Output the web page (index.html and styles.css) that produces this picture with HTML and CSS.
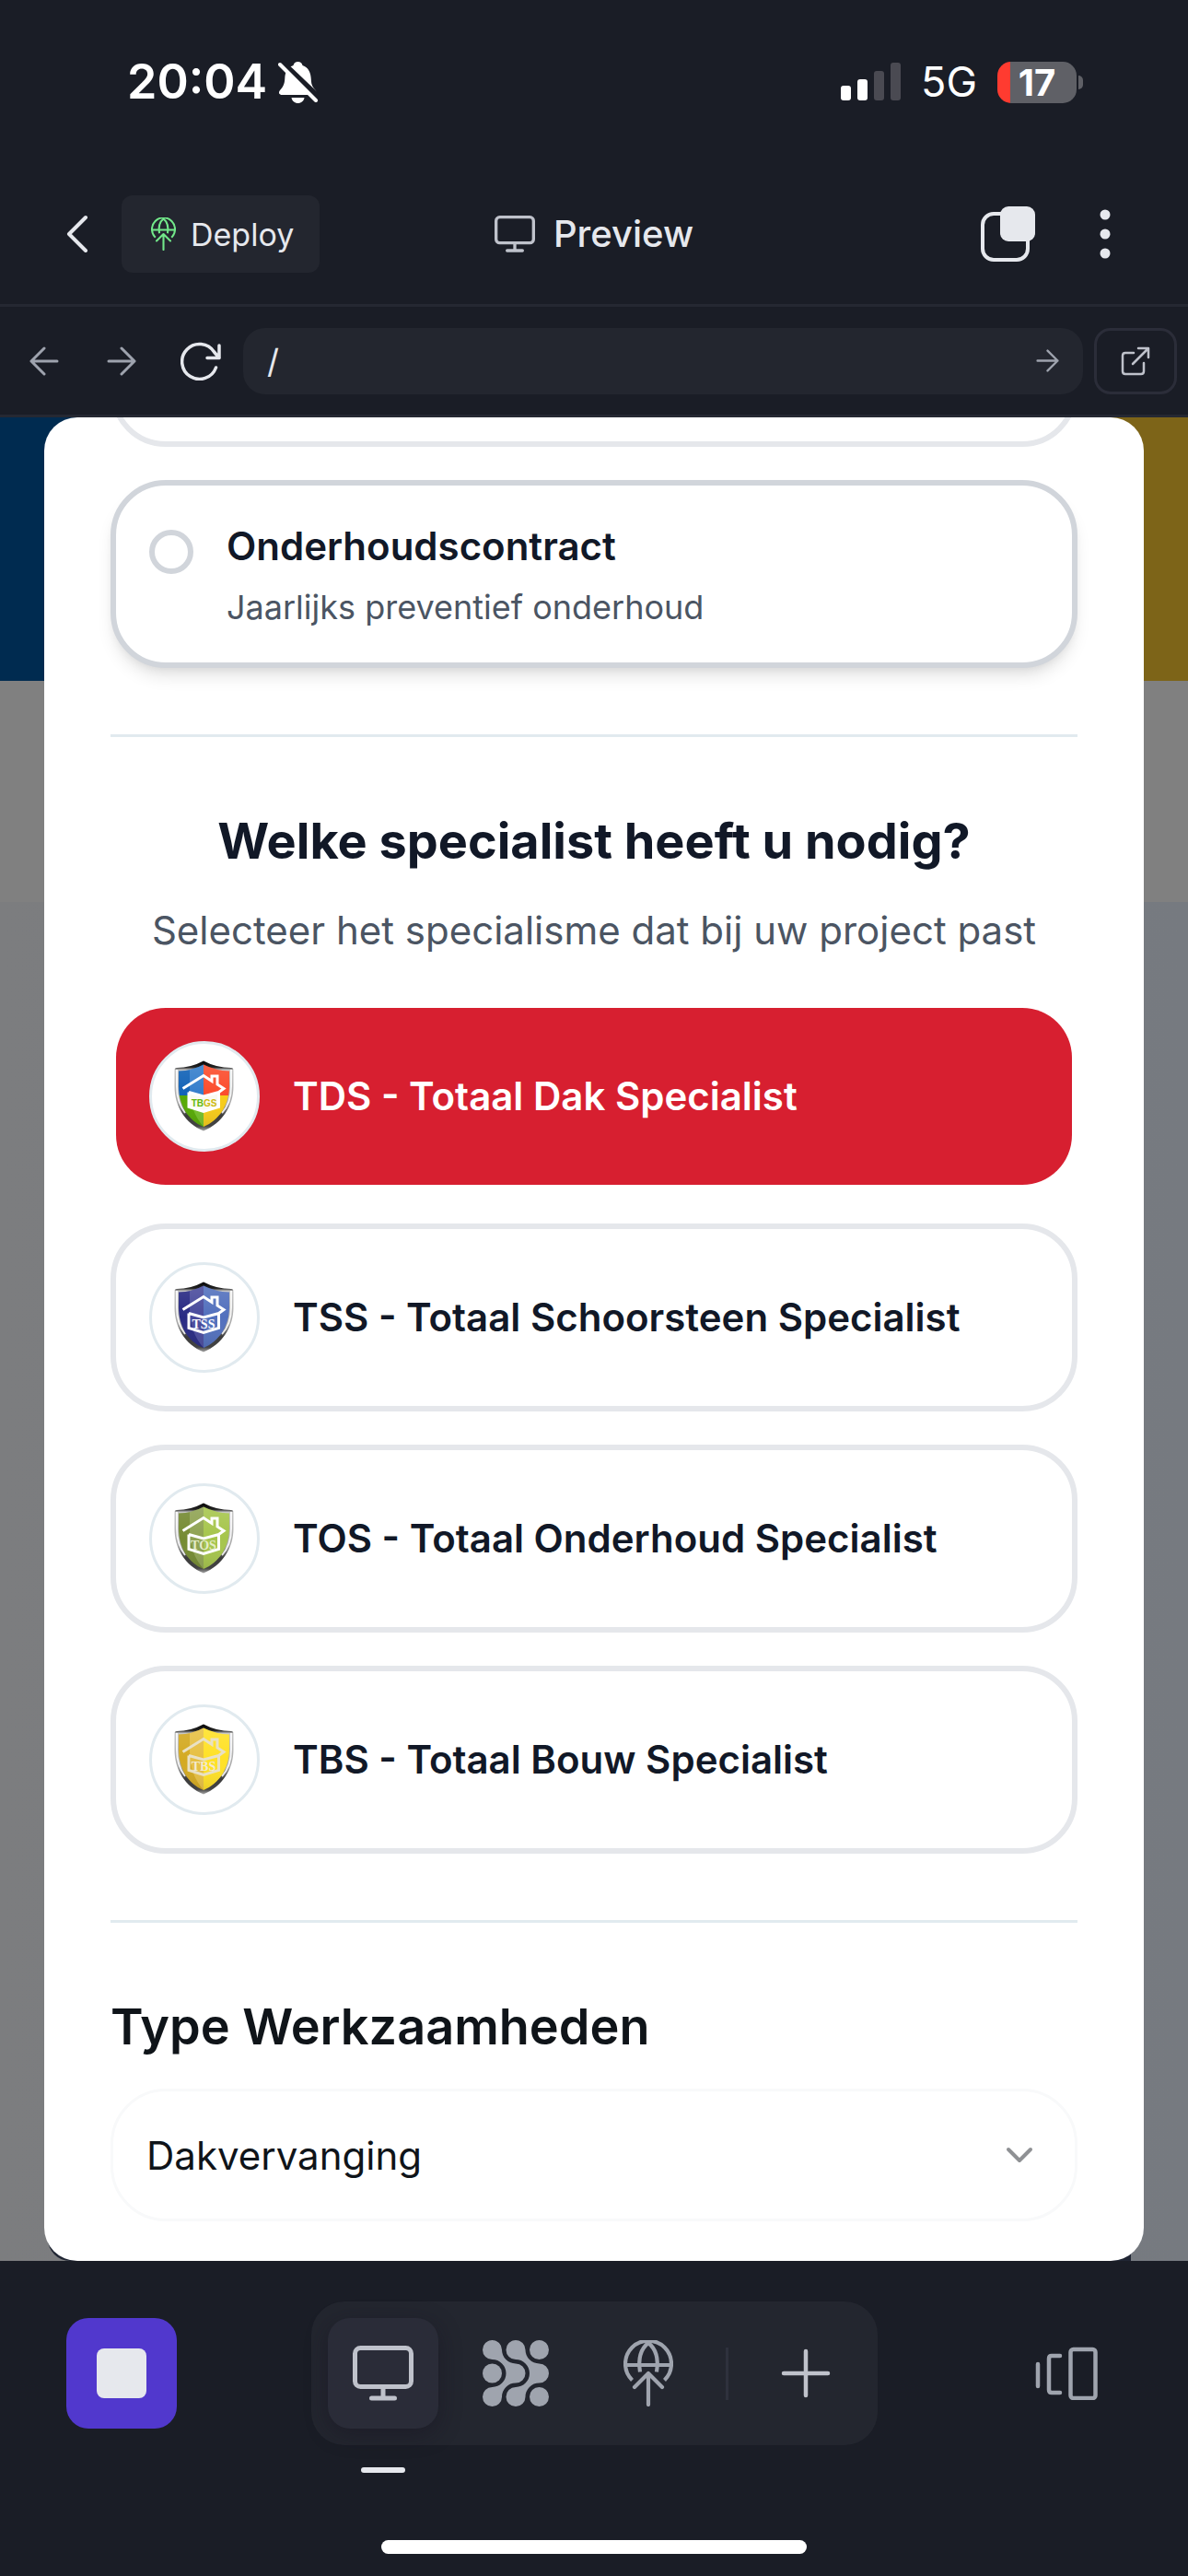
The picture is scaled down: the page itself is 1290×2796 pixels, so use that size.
FILE: index.html
```html
<!DOCTYPE html>
<html lang="nl">
<head>
<meta charset="utf-8">
<meta name="viewport" content="width=device-width, initial-scale=1">
<title>Preview</title>
<link rel="stylesheet" href="styles.css">
</head>
<body>
<svg class="defs" aria-hidden="true">
  <defs>
    <linearGradient id="metal" x1="0" y1="0" x2="0" y2="1">
      <stop offset="0" stop-color="#050505"/><stop offset=".09" stop-color="#222"/>
      <stop offset=".13" stop-color="#c8c8c8"/><stop offset=".6" stop-color="#a8a8a8"/>
      <stop offset=".78" stop-color="#3c3c3c"/><stop offset=".93" stop-color="#444"/><stop offset="1" stop-color="#aaa"/>
    </linearGradient>
    <linearGradient id="shade" x1="0" y1="0" x2="0" y2="1">
      <stop offset="0" stop-color="#fff" stop-opacity=".14"/><stop offset=".5" stop-color="#fff" stop-opacity="0"/>
      <stop offset="1" stop-color="#000" stop-opacity=".12"/>
    </linearGradient>
    <clipPath id="shield-clip"><path d="M32 4.500Q45 11 60 11.500V28C60 48 49 65 32 72C15 65 5 48 5 28V11.500Q20 11 32 4.500Z"/></clipPath>
    <symbol id="shield-frame" viewBox="0 0 66 78">
      <path fill="url(#metal)" d="M32 .5Q46 8 62 8Q64.500 8 64.500 11V28C64.500 50 52 68 32 76.500C12 68 .5 50 .5 28V11Q.5 8 3 8Q18 8 32 .5Z"/>
      <path fill="none" stroke="#fff" stroke-opacity=".85" stroke-width="2" d="M3 10V28C3 40 6.500 50 12 57M62 10V28C62 40 58.500 50 52 57"/>
    </symbol>
    <symbol id="shield-gloss" viewBox="0 0 66 78">
      <g clip-path="url(#shield-clip)">
        <path fill="url(#shade)" d="M0 0H66V78H0Z"/>
        <path fill="#fff" fill-opacity=".14" d="M17 0H32V72Q17 55 17 30Z"/>
        <path fill="#000" fill-opacity=".06" d="M0 0H17V30Q17 55 32 72H0Z"/>
      </g>
    </symbol>
    <symbol id="house" viewBox="0 0 66 78">
      <path fill="none" stroke="currentColor" stroke-width="3" d="M9.500 30.500L32 16.500L41 22.500V17H47V26L54 30.500L48.500 34.500M16 34.500V50.500L32 55.500L48.500 50.500V34.500L32 39L16 34.500"/>
    </symbol>
    <symbol id="globe" viewBox="0 0 54 72">
      <g fill="none" stroke="currentColor" stroke-width="4.200" stroke-linecap="round">
        <path stroke-linecap="butt" d="M9.500 43.500A25 25 0 1 1 44.500 43.500"/>
        <path d="M3 27H51"/>
        <path stroke-linecap="butt" d="M18 34.500C16 22 18 10 27 3C36 10 38 22 36 34.500"/>
        <path stroke-linejoin="round" d="M12 51L27 36L42 51M27 37V70"/>
      </g>
    </symbol>
    <symbol id="monitor" viewBox="0 0 66 60">
      <g fill="none" stroke="currentColor" stroke-width="5" stroke-linecap="round">
        <rect x="2.500" y="2.500" width="61" height="42" rx="6"/>
        <path d="M33 45V56M20.500 57H45.500"/>
      </g>
    </symbol>
    <symbol id="arrow" viewBox="0 0 32 32">
      <path fill="none" stroke="currentColor" stroke-width="3" stroke-linecap="round" stroke-linejoin="round" d="M2 16H30M16 2L30 16L16 30"/>
    </symbol>
  </defs>
</svg>

<div class="status-bar">
  <div class="status-left">
    <span class="clock">20:04</span>
    <svg class="bell" width="44" height="46" viewBox="0 0 44 46" aria-hidden="true">
      <path fill="#fff" d="M21.500 1C24 1 26 2.500 26.500 5C33 7 35.500 13 35.800 20C36 27 38 29 41 32.500C42.500 35 41 37 38.500 37H4.500C1 37 0 34.500 2 32C5 28.500 7 26 7.300 19C7.600 12 10 7 16.500 5C17 2.500 19 1 21.500 1Z"/>
      <path fill="#fff" d="M14.500 40H28.500C28 43.500 25 46 21.500 46C18 46 15 43.500 14.500 40Z"/>
      <path stroke="#1a1d26" stroke-width="7" d="M2 0L44 40"/>
      <path stroke="#fff" stroke-width="4" stroke-linecap="round" d="M2 4L41 43"/>
    </svg>
  </div>
  <div class="status-right">
    <svg width="65" height="42" viewBox="0 0 65 42" aria-hidden="true">
      <rect x="0" y="25" width="11" height="16" rx="3" fill="#fff"/><rect x="18" y="18" width="11" height="23" rx="3" fill="#fff"/>
      <rect x="36" y="9" width="11" height="32" rx="3" fill="#4a4a52"/><rect x="54" y="0" width="11" height="41" rx="3" fill="#4a4a52"/>
    </svg>
    <span class="network">5G</span>
    <span class="battery">17</span>
  </div>
</div>

<header class="app-header">
  <div class="header-side">
    <button class="icon-button back" aria-label="Terug">
      <svg width="24" height="42" viewBox="0 0 24 42"><path fill="none" stroke="currentColor" stroke-width="4" stroke-linecap="round" stroke-linejoin="round" d="M21 3L3 21L21 39"/></svg>
    </button>
    <button class="deploy"><svg width="27" height="36"><use href="#globe"/></svg>Deploy</button>
  </div>
  <h1 class="app-title"><svg width="44" height="40" aria-hidden="true"><use href="#monitor"/></svg>Preview</h1>
  <div class="header-side header-actions">
    <button class="icon-button" aria-label="Tabbladen">
      <svg width="60" height="60" viewBox="0 0 60 60"><rect x="2" y="8" width="49" height="50" rx="12" fill="none" stroke="currentColor" stroke-width="4"/><rect x="21" y="0" width="38" height="38" rx="9" fill="currentColor"/></svg>
    </button>
    <button class="icon-button menu" aria-label="Menu">
      <svg width="12" height="54" viewBox="0 0 12 54" fill="currentColor"><circle cx="6" cy="6" r="5.500"/><circle cx="6" cy="27" r="5.500"/><circle cx="6" cy="48" r="5.500"/></svg>
    </button>
  </div>
</header>

<nav class="address-bar">
  <button class="nav-button" aria-label="Vorige"><svg class="flip" width="32" height="32"><use href="#arrow"/></svg></button>
  <button class="nav-button" aria-label="Volgende"><svg width="32" height="32"><use href="#arrow"/></svg></button>
  <button class="nav-button reload" aria-label="Vernieuwen">
    <svg width="44" height="42" viewBox="0 0 44 42"><path fill="none" stroke="currentColor" stroke-width="3.500" stroke-linecap="round" stroke-linejoin="round" d="M38.500 28A19 19 0 1 1 36.500 11L42 17.500M42 4V17.500H29"/></svg>
  </button>
  <div class="url-field">
    <input class="url-input" type="text" value="/" aria-label="Pad">
    <button class="url-go" aria-label="Ga"><svg width="25" height="25"><use href="#arrow"/></svg></button>
  </div>
  <button class="external" aria-label="Openen in nieuw venster">
    <svg width="32" height="32" viewBox="0 0 32 32"><path fill="none" stroke="currentColor" stroke-width="2.500" stroke-linecap="round" stroke-linejoin="round" d="M14 7H5Q2 7 2 10V27Q2 30 5 30H22Q25 30 25 27V18M19 2H30V12M30 2L13 19"/></svg>
  </button>
</nav>

<main class="viewport">
  <div class="site" aria-hidden="true">
    <div class="site-banner"></div>
    <div class="site-header"></div>
    <div class="site-body"><div class="site-card"></div></div>
  </div>
  <form class="modal">
    <div class="option option-scrolled"></div>
    <label class="option option-hover">
      <input class="radio" type="radio" name="dienst">
      <span class="option-text">
        <span class="option-title">Onderhoudscontract</span>
        <span class="option-note">Jaarlijks preventief onderhoud</span>
      </span>
    </label>
    <hr class="divider">
    <h2 class="heading">Welke specialist heeft u nodig?</h2>
    <p class="lead">Selecteer het specialisme dat bij uw project past</p>
    <div class="specialists">
      <button type="button" class="option specialist selected" aria-pressed="true">
        <span class="badge"><svg width="66" height="78" viewBox="0 0 66 78" aria-hidden="true">
          <use href="#shield-frame"/>
          <g clip-path="url(#shield-clip)"><path fill="#1268c3" d="M0 0H32V38H0Z"/><path fill="#fb4b2b" d="M32 0H66V38H32Z"/><path fill="#5cb405" d="M0 38H32V78H0Z"/><path fill="#f7cc18" d="M32 38H66V78H32Z"/></g>
          <use href="#shield-gloss"/><path fill="#fafaf0" d="M16 35L32 39L48.500 35V50L32 55L16 50Z"/><use href="#house" color="#fff"/>
          <text class="badge-text tight" x="32" y="50" text-anchor="end" fill="#62b80c">TB</text><text class="badge-text tight" x="32" y="50" fill="#cdb80c">GS</text>
        </svg></span>
        TDS - Totaal Dak Specialist
      </button>
      <button type="button" class="option specialist" aria-pressed="false">
        <span class="badge"><svg width="66" height="78" viewBox="0 0 66 78" aria-hidden="true">
          <use href="#shield-frame"/>
          <g clip-path="url(#shield-clip)"><path fill="#2b2d8c" d="M0 0H32V78H0Z"/><path fill="#5270bd" d="M32 0H66V78H32Z"/></g>
          <use href="#shield-gloss"/><use href="#house" color="#fff"/>
          <text class="badge-text" x="32" y="51" text-anchor="middle" fill="#fff">TSS</text>
        </svg></span>
        TSS - Totaal Schoorsteen Specialist
      </button>
      <button type="button" class="option specialist" aria-pressed="false">
        <span class="badge"><svg width="66" height="78" viewBox="0 0 66 78" aria-hidden="true">
          <use href="#shield-frame"/>
          <g clip-path="url(#shield-clip)"><path fill="#7d9436" d="M0 0H32V78H0Z"/><path fill="#a6c54c" d="M32 0H66V78H32Z"/></g>
          <use href="#shield-gloss"/><use href="#house" color="#fff"/>
          <text class="badge-text" x="32" y="51" text-anchor="middle" fill="#e4ecc8">TOS</text>
        </svg></span>
        TOS - Totaal Onderhoud Specialist
      </button>
      <button type="button" class="option specialist" aria-pressed="false">
        <span class="badge"><svg width="66" height="78" viewBox="0 0 66 78" aria-hidden="true">
          <use href="#shield-frame"/>
          <g clip-path="url(#shield-clip)"><path fill="#e2b524" d="M0 0H32V78H0Z"/><path fill="#ffe126" d="M32 0H66V78H32Z"/></g>
          <use href="#shield-gloss"/><use href="#house" color="#e9e1c4"/>
          <text class="badge-text" x="32" y="51" text-anchor="middle" fill="#f3ead0">TBS</text>
        </svg></span>
        TBS - Totaal Bouw Specialist
      </button>
    </div>
    <hr class="divider">
    <label class="field-label" for="werk">Type Werkzaamheden</label>
    <div class="select-wrap">
      <select class="select" id="werk"><option>Dakvervanging</option></select>
      <svg class="chevron" width="30" height="18" viewBox="0 0 30 18" aria-hidden="true"><path fill="none" stroke="#8f9194" stroke-width="4" stroke-linecap="round" stroke-linejoin="round" d="M3 3L15 15L27 3"/></svg>
    </div>
  </form>
</main>

<footer class="toolbar">
  <div class="toolbar-row">
    <button class="stop" aria-label="Stop"><span class="stop-mark"></span></button>
    <div class="tabs">
      <button class="tab active" aria-label="Preview"><svg width="66" height="60"><use href="#monitor"/></svg></button>
      <button class="tab" aria-label="Agent">
        <svg width="72" height="72" viewBox="0 0 72 72" fill="currentColor">
          <circle cx="61.500" cy="10.500" r="10.500"/><circle cx="10.500" cy="36" r="10.500"/><circle cx="61.500" cy="61.500" r="10.500"/>
          <path d="M10.500 0A10.500 10.500 0 0 1 21 10.500A15 15 0 0 0 36 25.500A10.500 10.500 0 0 1 36 46.500A15 15 0 0 0 21 61.500A10.500 10.500 0 1 1 10.500 51A15 15 0 0 0 10.500 21A10.500 10.500 0 0 1 10.500 0Z"/>
          <path d="M36 0A10.500 10.500 0 0 1 46.500 10.500A15 15 0 0 0 61.500 25.500A10.500 10.500 0 0 1 61.500 46.500A15 15 0 0 0 46.500 61.500A10.500 10.500 0 1 1 36 51A15 15 0 0 0 36 21A10.500 10.500 0 0 1 36 0Z"/>
        </svg>
      </button>
      <button class="tab" aria-label="Deploy"><svg width="54" height="72"><use href="#globe"/></svg></button>
      <span class="tab-divider"></span>
      <button class="tab add" aria-label="Nieuw tabblad"><svg width="54" height="54" viewBox="0 0 54 54"><path stroke="currentColor" stroke-width="4.500" stroke-linecap="round" d="M27 3V51M3 27H51"/></svg></button>
    </div>
    <button class="switcher" aria-label="Vensters">
      <svg width="68" height="58" viewBox="0 0 68 58" fill="none" stroke="currentColor" stroke-width="4.500" stroke-linecap="round"><path d="M3 19V43M27 10H18Q15 10 15 13V47Q15 50 18 50H27"/><rect x="38.500" y="3" width="27" height="53" rx="3"/></svg>
    </button>
  </div>
  <div class="home-indicator"></div>
</footer>
</body>
</html>
```
FILE: styles.css
```css
* { box-sizing: border-box; }

body {
  margin: 0;
  min-height: 100vh;
  display: flex;
  flex-direction: column;
  background: #1a1d26;
  color: #e6e8ed;
  font-family: Inter, "Liberation Sans", sans-serif;
}

button, input, select {
  margin: 0;
  padding: 0;
  border: 0;
  background: none;
  color: inherit;
  font: inherit;
}

svg { display: block; flex: none; }
.defs { position: absolute; width: 0; height: 0; }

/* Phone status bar */
.status-bar {
  height: 178px;
  padding: 0 112px 0 138px;
  display: flex;
  align-items: center;
  justify-content: space-between;
  color: #fff;
}
.status-left { display: flex; align-items: center; gap: 12px; }
.clock { font-size: 52px; line-height: 58px; font-weight: 600; }
.status-right { display: flex; align-items: center; gap: 22px; }
.network { font-size: 45px; line-height: 54px; font-weight: 400; }
.battery {
  position: relative;
  width: 86px;
  height: 45px;
  margin-right: 9px;
  border-radius: 15px;
  background: linear-gradient(to right, #ff3b30 14px, #5f6066 14px);
  font-size: 40px;
  line-height: 45px;
  font-weight: 700;
  text-align: center;
}
.battery::after {
  content: "";
  position: absolute;
  left: 88px;
  top: 15px;
  width: 5px;
  height: 15px;
  border-radius: 0 6px 6px 0;
  background: #5f6066;
}

/* App header */
.app-header {
  height: 155px;
  padding: 0 54px;
  display: grid;
  grid-template-columns: 1fr auto 1fr;
  align-items: center;
  border-bottom: 3px solid #252832;
}
.header-side { display: flex; align-items: center; gap: 18px; }
.header-actions { justify-content: flex-end; gap: 39px; }
.icon-button {
  width: 60px;
  height: 84px;
  display: flex;
  align-items: center;
  justify-content: center;
}
.menu { width: 72px; }
.deploy {
  height: 84px;
  padding: 0 28px 0 32px;
  display: flex;
  align-items: center;
  gap: 16px;
  border-radius: 12px;
  background: #23262f;
  font-size: 34px;
}
.deploy svg { color: #72e88a; }
.app-title {
  margin: 0;
  display: flex;
  align-items: center;
  gap: 20px;
  font-size: 40px;
  line-height: 48px;
  font-weight: 500;
}
.app-title svg { color: #bfc2cb; }

/* Address bar */
.address-bar {
  height: 120px;
  padding: 0 12px 0 6px;
  display: flex;
  align-items: center;
  border-bottom: 3px solid #252832;
  color: #9ea3ae;
}
.nav-button {
  width: 84px;
  height: 72px;
  display: flex;
  align-items: center;
  justify-content: center;
}
.flip { transform: scaleX(-1); }
.reload { width: 88px; color: #e6e8ed; }
.url-field {
  flex: 1;
  height: 72px;
  margin: 0 12px 0 2px;
  padding: 0 26px;
  display: flex;
  align-items: center;
  border-radius: 24px;
  background: #23262f;
}
.url-input { flex: 1; min-width: 0; color: #e6e8ed; font-size: 36px; line-height: 48px; }
.external {
  width: 90px;
  height: 72px;
  display: flex;
  align-items: center;
  justify-content: center;
  border: 3px solid #2b2d39;
  border-radius: 18px;
  color: #bfc2cb;
}

/* Previewed site, dimmed behind the dialog */
.viewport { flex: 1; display: grid; overflow: hidden; }
.site, .modal { grid-area: 1 / 1; }
.site { display: flex; flex-direction: column; }
.site-banner { height: 286px; background: linear-gradient(to right, #002b50 50%, #7d6418 50%); }
.site-header { height: 240px; background: #808080; }
.site-body {
  flex: 1;
  display: flex;
  align-items: flex-end;
  padding: 0 62px 0 52px;
  background: linear-gradient(to right, #7c7d7f, #767a80);
}
.site-card {
  flex: 1;
  height: 24px;
  border: 6px solid #202634;
  border-top: 0;
  border-radius: 0 0 0 24px;
}

/* Dialog */
.modal {
  margin: 0 48px;
  padding: 0 72px 43px;
  overflow: hidden;
  border-radius: 36px;
  background: #fff;
  color: #111827;
}
.option {
  width: 100%;
  min-height: 204px;
  padding: 36px;
  display: flex;
  gap: 36px;
  border: 6px solid #e5e7eb;
  border-radius: 60px;
  background: #fff;
}
.option-scrolled { margin: -172px 0 36px; }
.option-hover {
  border-color: #d1d5db;
  box-shadow: 0 12px 18px -3px rgb(0 0 0 / 10%), 0 6px 12px -6px rgb(0 0 0 / 10%);
}
.radio {
  flex: none;
  appearance: none;
  width: 48px;
  height: 48px;
  margin-top: 12px;
  border: 6px solid #d1d5db;
  border-radius: 50%;
}
.option-text { display: flex; flex-direction: column; gap: 12px; }
.option-title { font-size: 42px; line-height: 60px; font-weight: 600; }
.option-note { font-size: 36px; line-height: 48px; color: #4b5563; }
.divider { height: 3px; margin: 72px 0; border: 0; background: #e1eaef; }
.heading {
  margin: 0 0 24px;
  font-size: 54px;
  line-height: 81px;
  font-weight: 700;
  text-align: center;
}
.lead {
  margin: 0 0 45px;
  font-size: 42px;
  line-height: 66px;
  color: #4b5563;
  text-align: center;
}
.specialists { display: flex; flex-direction: column; gap: 36px; }
.specialist {
  align-items: center;
  font-size: 42px;
  line-height: 60px;
  font-weight: 600;
  text-align: left;
}
.selected {
  border-color: transparent;
  background: #d71f30 padding-box;
  color: #fff;
}
.badge {
  flex: none;
  width: 120px;
  height: 120px;
  display: flex;
  align-items: center;
  justify-content: center;
  border: 3px solid #e1eaef;
  border-radius: 50%;
  background: #fff;
}
.badge-text { font-family: "Liberation Serif", serif; font-size: 14px; font-weight: 700; }
.tight { font-family: "Liberation Sans", sans-serif; font-size: 10px; }
.field-label {
  display: block;
  margin-bottom: 27px;
  color: #0f1419;
  font-size: 54px;
  line-height: 81px;
  font-weight: 600;
}
.select-wrap { position: relative; }
.select {
  appearance: none;
  width: 100%;
  height: 144px;
  padding: 0 120px 0 36px;
  border: 3px solid #f8f9fa;
  border-radius: 60px;
  background: #fff;
  color: #0f1419;
  font-size: 42px;
}
.chevron { position: absolute; right: 48px; top: 63px; pointer-events: none; }

/* Bottom toolbar */
.toolbar { padding: 44px 72px 24px; color: #9fa4ae; }
.toolbar-row { display: grid; grid-template-columns: 1fr auto 1fr; align-items: center; }
.stop, .tab, .switcher {
  width: 120px;
  height: 120px;
  display: flex;
  align-items: center;
  justify-content: center;
  border-radius: 24px;
}
.stop { background: #5138cd; }
.stop-mark { width: 54px; height: 54px; border-radius: 8px; background: #e6e8ed; }
.switcher { justify-self: end; }
.tabs {
  padding: 18px;
  display: flex;
  align-items: center;
  gap: 24px;
  border-radius: 36px;
  background: #23262f;
}
.active {
  position: relative;
  background: #2a2c38;
  color: #bfc2cb;
  box-shadow: 0 6px 24px rgb(20 16 30 / 40%);
}
.active::after {
  content: "";
  position: absolute;
  left: 36px;
  bottom: -48px;
  width: 48px;
  height: 6px;
  border-radius: 3px;
  background: #e6e8ed;
}
.add { color: #bfc2cb; }
.tab-divider { width: 3px; height: 57px; background: #2e313d; }
.home-indicator {
  width: 44%;
  max-width: 462px;
  height: 15px;
  margin: 103px auto 0;
  border-radius: 8px;
  background: #fff;
}
```
